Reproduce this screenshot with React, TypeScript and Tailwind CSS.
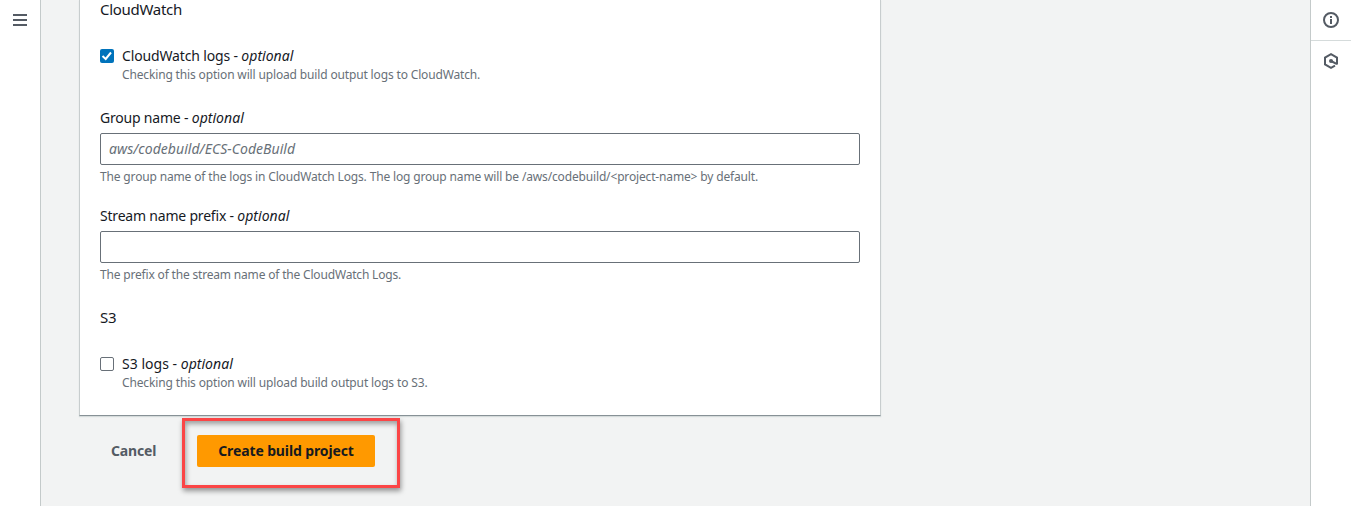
import type { ReactNode } from "react";

function Checkbox({ checked }: { checked?: boolean }) {
  return checked ? (
    <svg className="h-[14px] w-[14px] shrink-0" viewBox="0 0 14 14" role="img" aria-label="checked">
      <rect width="14" height="14" rx="2" fill="#0073bb" />
      <path d="M2.5 7 5.7 10 11 3.5" fill="none" stroke="#fff" strokeWidth="2" />
    </svg>
  ) : (
    <span className="h-[14px] w-[14px] shrink-0 rounded-[2px] border border-[#687078] bg-white" />
  );
}

function Optional() {
  return <i className="tracking-[0.03px]">optional</i>;
}

function Hint({ className, children }: { className: string; children: ReactNode }) {
  return <p className={`text-[12px] leading-4 whitespace-nowrap text-[#687078] ${className}`}>{children}</p>;
}

export default function App() {
  return (
    <div className="flex h-[506px] w-full overflow-hidden bg-[#f2f3f3] font-['Noto_Sans','Open_Sans',sans-serif] text-[14px] leading-[22px] text-[#16191f]">
      <nav className="flex w-[41px] shrink-0 flex-col border-r border-[#c4caca] bg-white pt-[14px] pl-[13px]">
        <svg className="h-3 w-[14px]" viewBox="0 0 14 12" fill="#545b64">
          <path d="M0 0h14v2H0zM0 5h14v2H0zM0 10h14v2H0z" />
        </svg>
      </nav>

      <main className="flex grow flex-col pl-[38px]">
        <section className="flex h-[416px] w-[802px] shrink-0 flex-col border-x border-b border-x-[#c8cdce] border-b-[#879196] bg-white pl-5 shadow-[0_1px_1px_#d5dbdb]">
          <h2 className="mt-[-2px] text-[15px] tracking-[-0.3px]">CloudWatch</h2>

          <div className="mt-[25px] flex h-[22px] items-center gap-2">
            <Checkbox checked />
            <span className="tracking-[-0.15px] whitespace-nowrap">
              CloudWatch logs - <Optional />
            </span>
          </div>
          <Hint className="ml-[22px] tracking-[-0.15px]">Checking this option will upload build output logs to CloudWatch.</Hint>

          <label className="mt-6 tracking-[-0.2px]">
            Group name - <Optional />
          </label>
          <div className="mt-[4px] flex h-8 w-[760px] items-center rounded-[2px] border border-[#687078] pl-2 tracking-[0.05px] text-[#687078] italic">
            aws/codebuild/ECS-CodeBuild
          </div>
          <Hint className="mt-1 tracking-[-0.155px]">
            The group name of the logs in CloudWatch Logs. The log group name will be /aws/codebuild/&lt;project-name&gt; by default.
          </Hint>

          <label className="mt-5 tracking-[-0.2px]">
            Stream name prefix - <Optional />
          </label>
          <div className="mt-[4px] h-8 w-[760px] rounded-[2px] border border-[#687078]" />
          <Hint className="mt-1 tracking-[-0.18px]">The prefix of the stream name of the CloudWatch Logs.</Hint>

          <h2 className="mt-[23px] text-[15px] tracking-[-0.3px]">S3</h2>

          <div className="mt-[25px] flex h-[22px] items-center gap-2">
            <Checkbox />
            <span className="tracking-[0.02px] whitespace-nowrap">
              S3 logs - <Optional />
            </span>
          </div>
          <Hint className="ml-[22px] tracking-[-0.14px]">Checking this option will upload build output logs to S3.</Hint>
        </section>

        <div className="mt-[2px] flex text-[14px] font-bold">
          <button className="mt-[17px] ml-[32px] h-8 w-[45px] text-left tracking-[-0.15px] whitespace-nowrap text-[#545b64]">Cancel</button>
          <div className="ml-[26px] flex h-[70px] w-[218px] border-[3px] border-[#fb4546] pt-[14px] pl-[12px] shadow-[1px_3px_5px_rgba(0,0,0,0.4),inset_1px_3px_5px_rgba(0,0,0,0.35)]">
            <button className="h-8 w-[178px] rounded-[2px] bg-[#ff9900] tracking-[-0.12px] whitespace-nowrap text-[#16191f]">
              Create build project
            </button>
          </div>
        </div>
      </main>

      <aside className="flex w-[41px] shrink-0 flex-col border-l border-[#c4caca] bg-white text-[#545b64]">
        <div className="flex h-[41px] items-center justify-center border-b border-[#d5dbdb]">
          <svg className="h-4 w-4" viewBox="0 0 16 16" fill="none" stroke="currentColor" strokeWidth="2">
            <circle cx="8" cy="8" r="7" />
            <path d="M8 4v2M8 7v5" />
          </svg>
        </div>
        <div className="flex h-10 items-center justify-center">
          <svg className="h-4 w-4" viewBox="0 0 16 16" fill="none" stroke="currentColor" strokeWidth="2">
            <path d="M14 11.5v-7L8 1.2 2 4.5v7l6 3.3 4-2.2M8 8l6 3.2" />
            <circle cx="8" cy="8" r="2" fill="currentColor" stroke="none" />
          </svg>
        </div>
      </aside>
    </div>
  );
}
